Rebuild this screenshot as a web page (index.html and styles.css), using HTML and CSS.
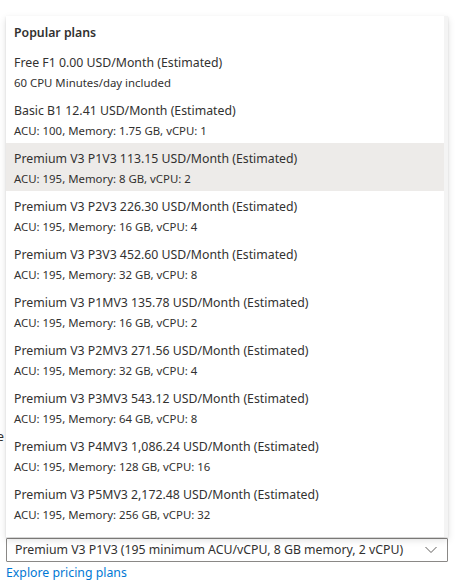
FILE: index.html
```html
<!DOCTYPE html>
<html lang="en">
<head>
<meta charset="utf-8">
<link rel="stylesheet" href="styles.css">
</head>
<body>
<div class="page">
  <div class="behind-label">e</div>
  <div class="field">
    <div class="select">
      <span class="select-text">Premium V3 P1V3 (195 minimum ACU/vCPU, 8 GB memory, 2 vCPU)</span>
      <svg class="chev" width="12" height="8" viewBox="0 0 12 8"><path d="M0.5 1 L6 6.5 L11.5 1" fill="none" stroke="#605e5c" stroke-width="1"/></svg>
    </div>
    <a class="link" href="#">Explore pricing plans</a>
  </div>

  <div class="popup">
    <div class="list">
      <div class="group-header">Popular plans</div>
      <div class="opt"><div class="t">Free F1 0.00 USD/Month (Estimated)</div><div class="s">60 CPU Minutes/day included</div></div>
      <div class="opt"><div class="t">Basic B1 12.41 USD/Month (Estimated)</div><div class="s">ACU: 100, Memory: 1.75 GB, vCPU: 1</div></div>
      <div class="opt selected"><div class="t">Premium V3 P1V3 113.15 USD/Month (Estimated)</div><div class="s">ACU: 195, Memory: 8 GB, vCPU: 2</div></div>
      <div class="opt"><div class="t">Premium V3 P2V3 226.30 USD/Month (Estimated)</div><div class="s">ACU: 195, Memory: 16 GB, vCPU: 4</div></div>
      <div class="opt"><div class="t">Premium V3 P3V3 452.60 USD/Month (Estimated)</div><div class="s">ACU: 195, Memory: 32 GB, vCPU: 8</div></div>
      <div class="opt"><div class="t">Premium V3 P1MV3 135.78 USD/Month (Estimated)</div><div class="s">ACU: 195, Memory: 16 GB, vCPU: 2</div></div>
      <div class="opt"><div class="t">Premium V3 P2MV3 271.56 USD/Month (Estimated)</div><div class="s">ACU: 195, Memory: 32 GB, vCPU: 4</div></div>
      <div class="opt"><div class="t">Premium V3 P3MV3 543.12 USD/Month (Estimated)</div><div class="s">ACU: 195, Memory: 64 GB, vCPU: 8</div></div>
      <div class="opt"><div class="t">Premium V3 P4MV3 1,086.24 USD/Month (Estimated)</div><div class="s">ACU: 195, Memory: 128 GB, vCPU: 16</div></div>
      <div class="opt"><div class="t">Premium V3 P5MV3 2,172.48 USD/Month (Estimated)</div><div class="s">ACU: 195, Memory: 256 GB, vCPU: 32</div></div>
      <div class="opt partial"><div class="t">Isolated V2 I1V2 301.79 USD/Month (Estimated)</div></div>
    </div>
    <div class="scrollbar"></div>
  </div>
</div>
</body>
</html>
```

FILE: styles.css
```css
html, body {
  margin: 0;
  padding: 0;
  background: #ffffff;
}
body {
  font-family: "Noto Sans", "Open Sans", sans-serif;
  color: #323130;
  font-size: 12.3px;
}
.page {
  position: relative;
  width: 456px;
  height: 587px;
  overflow: hidden;
}
.behind-label {
  position: absolute;
  left: -3px;
  top: 428px;
  font-size: 12.3px;
  line-height: 18px;
}
.field {
  display: flex;
  flex-direction: column;
  align-items: flex-start;
  padding: 538px 8px 0 6px;
}
.select {
  box-sizing: border-box;
  width: 442px;
  height: 24px;
  border: 1px solid #8a8886;
  border-radius: 1px;
  display: flex;
  align-items: center;
  justify-content: space-between;
  padding: 0 10px 0 8px;
  background: #fff;
}
.select-text {
  font-size: 12.3px;
  line-height: 16px;
  white-space: nowrap;
}
.chev {
  display: block;
}
.link {
  margin-top: 2px;
  color: #0078d4;
  text-decoration: none;
  font-size: 12.3px;
  line-height: 18px;
}
.popup {
  position: absolute;
  left: 6px;
  top: 16px;
  width: 442px;
  height: 521px;
  background: #fff;
  overflow: hidden;
  box-shadow: 0 3.2px 7.2px rgba(0,0,0,0.13), 0 0.6px 1.8px rgba(0,0,0,0.11);
}
.list {
  display: flex;
  flex-direction: column;
}
.group-header {
  height: 31px;
  box-sizing: border-box;
  padding: 8px 8px 0 8px;
  line-height: 18px;
  font-weight: 600;
  font-size: 12.3px;
}
.opt {
  height: 48px;
  box-sizing: border-box;
  padding: 7px 8px 0 8px;
  display: flex;
  flex-direction: column;
  gap: 3px;
}
.opt.partial {
  height: 10px;
  overflow: hidden;
}
.opt.selected {
  background: #edebe9;
}
.t {
  font-size: 12.3px;
  line-height: 18px;
  white-space: nowrap;
}
.s {
  font-size: 11.4px;
  line-height: 16px;
  white-space: nowrap;
}
.scrollbar {
  position: absolute;
  right: 0;
  top: 0;
  width: 4px;
  height: 100%;
  background: #f4f4f4;
}
```
